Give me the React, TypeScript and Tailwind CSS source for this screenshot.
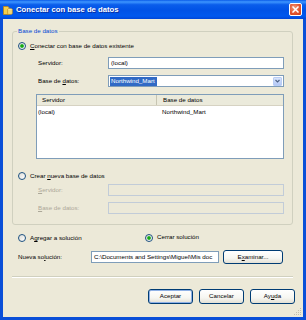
import React from "react";

const Radio = ({ checked = false }: { checked?: boolean }) => (
  <span className="w-[8px] h-[8px] rounded-full border border-[#1C5180] bg-[linear-gradient(135deg,#DCDCD7,#FFFFFF)] flex items-center justify-center shrink-0">
    {checked && (
      <span className="w-[4px] h-[4px] rounded-full bg-[radial-gradient(circle,#15A815_45%,#8CD88C_100%)]" />
    )}
  </span>
);

const Btn = ({ children, def = false }: { children: React.ReactNode; def?: boolean }) => (
  <div
    className={
      "w-[45px] h-[15px] rounded-[3px] border border-[#003C74] bg-[linear-gradient(180deg,#FFFFFF_0%,#F6F6F1_60%,#E3E0D5_100%)] flex items-center justify-center " +
      (def ? "shadow-[inset_0_0_0_1px_#8FB1E6]" : "")
    }
  >
    {children}
  </div>
);

export default function App() {
  return (
    <div className="w-[306px] h-[320px] bg-[#0A4FD8] flex flex-col font-['Liberation_Sans',Arial,sans-serif] text-[6.2px] leading-none text-black overflow-hidden">
      {/* Title bar */}
      <div className="h-[19px] shrink-0 flex items-center bg-[linear-gradient(180deg,#0A5BE8_0%,#3D95FF_10%,#0A5DEB_25%,#0052E6_55%,#0058EE_85%,#0045D6_100%)]">
        <svg className="ml-[3px] shrink-0" width="10" height="10" viewBox="0 0 10 10">
          <path d="M0.5 1.5 H5 L6 2.5 V9.5 H0.5 Z" fill="#F6CF4A" stroke="#B98419" strokeWidth="0.8" />
          <ellipse cx="7" cy="4.5" rx="2.4" ry="1" fill="#FFF7D6" stroke="#B98419" strokeWidth="0.6" />
          <path d="M4.6 4.5 V8.5 A2.4 1 0 0 0 9.4 8.5 V4.5" fill="#F3D873" stroke="#B98419" strokeWidth="0.6" />
        </svg>
        <span className="ml-[3px] text-white font-bold text-[7.7px] [text-shadow:1px_1px_0_#0A2FA0]">
          Conectar con base de datos
        </span>
        <div className="ml-auto mr-[4px] w-[13px] h-[13px] rounded-[2px] border border-white bg-[radial-gradient(circle_at_40%_35%,#F29A7A,#E0502B_60%,#C8401C)] flex items-center justify-center">
          <svg width="7" height="7" viewBox="0 0 7 7">
            <path d="M1 1 L6 6 M6 1 L1 6" stroke="white" strokeWidth="1.5" strokeLinecap="square" />
          </svg>
        </div>
      </div>

      {/* Body */}
      <div className="relative mx-[3px] mb-[3px] flex-1 bg-[#ECE9D8] flex flex-col">
        {/* Group box */}
        <div className="relative mt-[12px] ml-[9px] w-[281px] h-[194px] border border-[#D0D0BF] rounded-[3px] flex flex-col">
          <span className="absolute left-[4px] top-[-4px] px-[1px] bg-[#ECE9D8] text-[#0046D5]">Base de datos</span>

          <div className="mt-[9px] h-[10px] pl-[5px] flex items-center gap-[4px]">
            <Radio checked />
            <span>
              <u className="decoration-1 underline-offset-1">C</u>onectar con base de datos existente
            </span>
          </div>

          <div className="mt-[6px] h-[12px] pl-[25px] flex items-center">
            <span className="w-[70px]">Servidor:</span>
            <div className="w-[176px] h-[12px] border border-[#7F9DB9] bg-white flex items-center pl-[2px]">(local)</div>
          </div>

          <div className="mt-[6px] h-[12px] pl-[25px] flex items-center">
            <span className="w-[70px]">
              Base de <u className="decoration-1 underline-offset-1">d</u>atos:
            </span>
            <div className="w-[176px] h-[12px] border border-[#7F9DB9] bg-white flex items-center pl-[1px] pr-[1px]">
              <span className="h-[9px] w-[47px] bg-[#316AC5] text-white flex items-center pl-[1px]">Northwind_Mart</span>
              <div className="ml-auto w-[9px] h-[9px] rounded-[1px] bg-[linear-gradient(180deg,#D8E4FC,#B4C8F6)] border border-[#B9CDF5] flex items-center justify-center">
                <svg width="5" height="4" viewBox="0 0 5 4">
                  <path d="M0.5 1 L2.5 3 L4.5 1" fill="none" stroke="#4D6185" strokeWidth="1.1" />
                </svg>
              </div>
            </div>
          </div>

          <div className="mt-[7px] ml-[23px] w-[248px] h-[65px] border border-[#7F9DB9] bg-white flex flex-col">
            <div className="h-[11px] bg-[#EBEADB] border-b border-[#D6D2C2] flex items-center">
              <div className="w-[120px] h-full flex items-center pl-[5px] border-r border-[#C7C5B2]">Servidor</div>
              <div className="pl-[6px]">Base de datos</div>
            </div>
            <div className="h-[12px] flex items-center">
              <div className="w-[120px] pl-[1px]">(local)</div>
              <div className="pl-[5px]">Northwind_Mart</div>
            </div>
          </div>

          <div className="mt-[12px] h-[10px] pl-[5px] flex items-center gap-[4px]">
            <Radio />
            <span>
              Crear <u className="decoration-1 underline-offset-1">n</u>ueva base de datos
            </span>
          </div>

          <div className="mt-[3px] h-[12px] pl-[25px] flex items-center text-[#ACA899]">
            <span className="w-[70px]">
              <u className="decoration-1 underline-offset-1">S</u>ervidor:
            </span>
            <div className="w-[176px] h-[12px] border border-[#C2CCD8] bg-[#ECE9D8]" />
          </div>

          <div className="mt-[6px] h-[12px] pl-[25px] flex items-center text-[#ACA899]">
            <span className="w-[70px]">
              <u className="decoration-1 underline-offset-1">B</u>ase de datos:
            </span>
            <div className="w-[176px] h-[12px] border border-[#C2CCD8] bg-[#ECE9D8]" />
          </div>
        </div>

        {/* Solution radios */}
        <div className="mt-[8px] ml-[15px] h-[10px] flex items-center">
          <div className="w-[127px] flex items-center gap-[4px]">
            <Radio />
            <span>
              A<u className="decoration-1 underline-offset-1">g</u>regar a solución
            </span>
          </div>
          <div className="flex items-center gap-[4px] mt-[-1px]">
            <Radio checked />
            <span>Cerrar solución</span>
          </div>
        </div>

        <div className="mt-[7px] ml-[15px] h-[14px] flex items-center">
          <span className="w-[73px]">
            Nueva so<u className="decoration-1 underline-offset-1">l</u>ución:
          </span>
          <div className="w-[128px] h-[12px] border border-[#7F9DB9] bg-white flex items-center pl-[2px] overflow-hidden whitespace-nowrap">
            C:\Documents and Settings\Miguel\Mis doc
          </div>
          <div className="ml-[4px] w-[60px] h-[14px] rounded-[3px] border border-[#003C74] bg-[linear-gradient(180deg,#FFFFFF_0%,#F6F6F1_60%,#E3E0D5_100%)] flex items-center justify-center">
            <span>
              E<u className="decoration-1 underline-offset-1">x</u>aminar...
            </span>
          </div>
        </div>

        {/* Separator */}
        <div className="mt-[12px] ml-[9px] w-[281px] h-[2px] border-t border-[#D0D0BF] border-b border-b-white" />

        {/* Buttons */}
        <div className="mt-[11px] pr-[8px] flex justify-end gap-[6px]">
          <Btn def>Aceptar</Btn>
          <Btn>Cancelar</Btn>
          <Btn>
            <span>
              Ay<u className="decoration-1 underline-offset-1">u</u>da
            </span>
          </Btn>
        </div>

        {/* Size grip */}
        <svg className="absolute right-[1px] bottom-[1px]" width="8" height="8" viewBox="0 0 8 8">
          <g fill="#C3BFAE">
            <rect x="6" y="0" width="1" height="1" />
            <rect x="4" y="2" width="1" height="1" />
            <rect x="6" y="2" width="1" height="1" />
            <rect x="2" y="4" width="1" height="1" />
            <rect x="4" y="4" width="1" height="1" />
            <rect x="6" y="4" width="1" height="1" />
            <rect x="0" y="6" width="1" height="1" />
            <rect x="2" y="6" width="1" height="1" />
            <rect x="4" y="6" width="1" height="1" />
            <rect x="6" y="6" width="1" height="1" />
          </g>
        </svg>
      </div>
    </div>
  );
}
